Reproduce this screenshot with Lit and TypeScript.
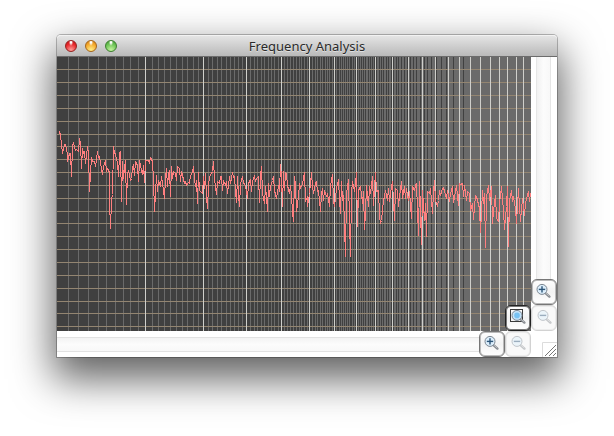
import { LitElement, html, svg, css } from "lit";
import { customElement, property } from "lit/decorators.js";

const PLOT_W = 474;
const PLOT_H = 274;

/* Logarithmic frequency axis: ten minor divisions for each major one. */
const axisX = (m: number) => Math.floor(172.3 * Math.log(1 + m / 15) + 0.3);
const LEVELS = [12, 25, 38, 51, 64, 77, 89, 102, 115, 128, 141, 154, 166, 179, 192, 205, 218, 231, 244, 256, 269];

/* Spectrum samples, stored as segments of "x,y" pairs in thirds of a unit. */
const SEGMENTS: { ox: number; oy: number; pts: string }[] = [
  {
    ox: -7, oy: 63,
    pts: "24,34 29,34 31,45 33,72 37,100 42,72 47,74 51,104 53,124 58,100 61,100 64,170 67,80 70,66 72,82 76,90 80,88 84,94 88,55 91,70 94,145 98,85 101,100 104,93 107,130 111,80 114,100 117,215 120,160 124,112 128,125 133,125 137,140 142,95 145,112 149,108 152,130 157,163 161,140 165,122 169,155 173,145 177,157 179,240 182,325 184,240 187,222 190,80 193,98 197,103 201,130 205,170 208,100 211,95 214,243 217,125 220,175 223,145 226,120 229,254 232,160 236,150 240,180 243,175 246,145 250,133 253,165 257,125 261,135 265,185 269,120 273,150 277,163 280,135 284,187 287,122 294,120 298,130 302,112 306,125 309,180 313,275 316,220 320,165 322,215 326,180 330,200 334,170 338,190 342,235 346,175 349,145 352,200 356,160 359,150",
  },
  {
    ox: 103, oy: 83,
    pts: "32,170 34,80 37,115 40,95 45,100 49,120 53,78 57,85 60,125 64,95 68,105 72,130 76,125 80,135 84,128 88,130 92,105 96,98 99,80 102,115 105,140 109,120 112,190 115,98 118,150 122,155 126,160 130,110 134,145 137,100 140,170 142,205 145,140 149,110 153,100 156,95 160,63 163,115 168,163 172,125 178,130 181,110 184,110 187,150 190,120 195,135 199,125 203,160 208,110 212,130 216,96 220,112 224,110 227,150 229,188 233,110 236,165 238,200 242,130 246,110 250,130 254,130 258,150 262,175 266,130 270,118 274,155 278,125 282,105 286,125 290,115 295,110 298,187 301,110 304,78 307,160 312,190 316,140 320,170 322,213 325,130 329,170 332,140 336,120 340,108 344,150 349,175 354,135 358,155",
  },
  {
    ox: 223, oy: 93,
    pts: "1,42 3,80 7,170 10,65 14,120 17,68 20,70 23,105 27,130 31,105 35,140 37,185 40,213 43,80 46,105 50,185 55,140 59,100 62,115 66,100 70,85 74,68 77,155 81,140 83,170 88,130 93,68 97,110 101,130 105,100 109,95 113,125 116,120 120,185 124,130 127,115 130,150 134,120 138,140 143,130 148,170 152,105 157,72 160,150 164,170 168,115 174,88 177,150 181,190 185,95 188,150 191,135 194,230 196,320 200,130 205,88 208,215 211,320 215,130 218,95 222,125 226,100 229,68 232,230 236,120 241,110 246,160 250,125 253,237 257,190 260,105 264,170 268,110 272,130 277,80 281,165 286,68 290,125 294,120 297,195 301,220 305,210 309,150 313,140 317,120 321,150 325,115 329,155 334,110 338,95 343,210 347,115 351,120 355,170 359,140",
  },
  {
    ox: 343, oy: 93,
    pts: "4,95 8,145 12,110 16,145 20,115 24,150 29,125 34,205 38,110 42,120 46,105 49,100 53,180 55,255 58,95 61,180 65,282 68,120 72,210 75,160 79,260 83,125 88,130 92,115 97,190 100,125 104,90 107,150 111,170 115,150 118,120 122,135 127,115 131,112 134,125 139,145 143,120 148,155 152,130 156,110 160,158 165,125 169,105 174,165 178,100 182,102 186,100 190,140 194,105 198,150 203,125 208,130 212,180 216,160 221,208 225,135 229,140 233,150 237,175 242,248 246,120 250,160 253,130 256,292 260,140 264,105 269,150 273,110 277,220 281,185 285,135 289,205 294,215 298,160 303,110 307,145 310,180 313,238 318,170 321,110 325,290 329,150 333,120 337,155 341,140 345,175 349,220 354,115 358,170 362,215 367,145 372,195 376,160 380,145 385,125 388,155 391,130",
  },
];

const TRACE = SEGMENTS.map((s) =>
  s.pts
    .split(" ")
    .map((p) => {
      const [x, y] = p.split(",").map(Number);
      return `${Math.floor(x / 3) + s.ox + 0.5},${Math.floor(y / 3) + s.oy + 0.5}`;
    })
    .join(" ")
).join(" ");

@customElement("spectrum-plot")
class SpectrumPlot extends LitElement {
  static styles = css`
    :host { display: block; overflow: hidden; background: #404040; }
    .plot { display: block; width: 100%; height: 100%; }
    .minor { fill: #6a6a6a; }
    .major { fill: #cfcfcb; }
    .level { fill: #938571; }
    .trace { fill: none; stroke: #ff8080; stroke-width: 1; stroke-linejoin: bevel; }
  `;
  render() {
    const minors: number[] = [];
    for (let m = 1; axisX(m) < PLOT_W; m++) minors.push(m);
    return html`<svg class="plot" viewBox="0 0 ${PLOT_W} ${PLOT_H}" preserveAspectRatio="none"
      shape-rendering="crispEdges" role="img" aria-label="Frequency spectrum">
      ${minors.filter((m) => m % 10).map((m) => svg`<rect class="minor" x=${axisX(m)} y="0" width="1" height=${PLOT_H} />`)}
      ${LEVELS.map((y) => svg`<rect class="level" x="0" y=${y} width=${PLOT_W} height="1" />`)}
      ${minors.filter((m) => m % 10 === 0).map((m) => svg`<rect class="major" x=${axisX(m)} y="0" width="1" height=${PLOT_H} />`)}
      <polyline class="trace" points=${TRACE} />
    </svg>`;
  }
}

@customElement("zoom-button")
class ZoomButton extends LitElement {
  @property() kind: "in" | "out" | "fit" = "in";
  @property() label = "";
  @property({ type: Boolean }) disabled = false;

  static styles = css`
    :host { display: block; width: 26px; height: 26px; }
    .btn {
      display: block; box-sizing: border-box; width: 26px; height: 26px; padding: 0;
      border: 1px solid #777; border-radius: 6px;
      background: linear-gradient(#fff, #f2f2f2 50%, #fff);
      box-shadow: inset 0 0 0 1px #bbb;
    }
    .fit { border-color: #222; box-shadow: inset 0 0 0 1px #777; }
    .btn:disabled { border-color: #d2d2d2; background: #f9f9f9; box-shadow: inset 0 0 0 1px #ececec; }
    .btn:disabled .icon { opacity: 0.45; }
    .icon { display: block; width: 24px; height: 24px; }
  `;
  render() {
    const fit = this.kind === "fit";
    return html`<button class="btn ${this.kind}" ?disabled=${this.disabled} aria-label=${this.label}>
      <svg class="icon" viewBox="0 0 24 24" fill="none">
        ${fit ? svg`<rect x="4.5" y="3.5" width="12" height="12" stroke="#3a3a3a" />` : ""}
        <g transform=${this.kind === "in" ? "" : "translate(1 0)"}>
          <path d="M13.8 13.4 L17.4 16.6" stroke="#85898e" stroke-width="2.4" stroke-linecap="round" />
          <path d="M14.2 13.4 L17 15.8" stroke="#c3c6c9" stroke-width="0.9" stroke-linecap="round" />
          <circle cx="10" cy="9.4" r="5" fill=${fit ? "#c4e2f8" : "#dceefb"} stroke="#7d8792" />
          ${fit
            ? svg`<circle cx="10" cy="9.4" r="2.8" fill="#78c2f2" />`
            : svg`<path d="M6.8 9.4 H13.2" stroke="#2c5578" stroke-width="1.4" />`}
          ${this.kind === "in" ? svg`<path d="M10 6.2 V12.6" stroke="#2c5578" stroke-width="1.4" />` : ""}
        </g>
      </svg>
    </button>`;
  }
}

@customElement("app-root")
class AppRoot extends LitElement {
  static styles = css`
    :host {
      display: flex; box-sizing: border-box; min-height: 100vh;
      padding: 35px 57px 79px; background: #fff; overflow: hidden;
    }
    .window {
      flex: 1; min-width: 0; display: flex; flex-direction: column; background: #fff;
      border-radius: 4px 4px 0 0;
      box-shadow: 0 0 0 1px rgba(0, 0, 0, 0.25), 0 18px 40px 4px rgba(0, 0, 0, 0.62);
    }
    .titlebar {
      display: grid; grid-template-columns: 1fr auto 1fr; align-items: center;
      box-sizing: border-box; height: 22px; padding: 0 8px;
      border-top: 1px solid #f2f2f2; border-bottom: 1px solid #6c6c6c; border-radius: 4px 4px 0 0;
      background: linear-gradient(#e4e4e4, #b9b9b9);
    }
    .lights { display: flex; gap: 8px; }
    .light {
      width: 12px; height: 12px; padding: 0; border: 1px solid; border-radius: 50%;
    }
    .close { border-color: #94221f; background: radial-gradient(ellipse at 50% 12%, #fff 0 8%, transparent 30%), radial-gradient(circle at 50% 90%, #ff9f9a, #e8282b 60%, #b81418); }
    .minimize { border-color: #a4651a; background: radial-gradient(ellipse at 50% 12%, #fff 0 8%, transparent 30%), radial-gradient(circle at 50% 90%, #fff08a, #f5a92c 60%, #c97a16); }
    .maximize { border-color: #3d7f2f; background: radial-gradient(ellipse at 50% 12%, #fff 0 8%, transparent 30%), radial-gradient(circle at 50% 90%, #c6f5a0, #6cc455 60%, #439134); }
    .title {
      margin: 0; font: 13px/20px "Lucida Grande", "Noto Sans", "Open Sans", sans-serif; color: #2a2a2a;
      text-shadow: 0 1px 0 rgba(255, 255, 255, 0.5);
    }
    .body { flex: 1; display: grid; grid-template: minmax(0, 1fr) 26px / minmax(0, 1fr) 26px; min-height: 0; }
    .view { position: relative; display: grid; min-width: 0; min-height: 0; }
    .overlay { position: absolute; right: 0; bottom: 0; }
    .side { display: flex; flex-direction: column; }
    .foot { display: flex; }
    .track { flex: 1; box-sizing: border-box; }
    .vertical {
      margin: 0 6px 0 5px; border: solid #e6e6e6; border-width: 0 1px;
      background: linear-gradient(90deg, #f1f1f1, #fcfcfc 50%, #f8f8f8);
    }
    .horizontal {
      margin: 6px 0 5px; border: solid #e2e2e2; border-width: 1px 0;
      background: linear-gradient(#f3f3f3, #fcfcfc 50%, #f8f8f8);
    }
    .corner { display: flex; align-items: flex-end; justify-content: flex-end; }
    .grip { display: block; width: 15px; height: 15px; }
  `;
  render() {
    return html`<main class="window">
      <header class="titlebar">
        <div class="lights">
          <button class="light close" aria-label="Close"></button>
          <button class="light minimize" aria-label="Minimize"></button>
          <button class="light maximize" aria-label="Zoom window"></button>
        </div>
        <h1 class="title">Frequency Analysis</h1>
      </header>
      <div class="body">
        <div class="view">
          <spectrum-plot></spectrum-plot>
          <zoom-button class="overlay" kind="fit" label="Zoom to fit"></zoom-button>
        </div>
        <div class="side">
          <div class="track vertical"></div>
          <zoom-button kind="in" label="Zoom in vertically"></zoom-button>
          <zoom-button kind="out" label="Zoom out vertically" disabled></zoom-button>
        </div>
        <div class="foot">
          <div class="track horizontal"></div>
          <zoom-button kind="in" label="Zoom in horizontally"></zoom-button>
          <zoom-button kind="out" label="Zoom out horizontally" disabled></zoom-button>
        </div>
        <div class="corner">
          <svg class="grip" viewBox="0 0 15 15" fill="none">
            <path d="M0.5 15 V0.5 H15" stroke="#dcdcdc" />
            <path d="M3 14 L14 3 M7 14 L14 7 M11 14 L14 11" stroke="#777" />
          </svg>
        </div>
      </div>
    </main>`;
  }
}
